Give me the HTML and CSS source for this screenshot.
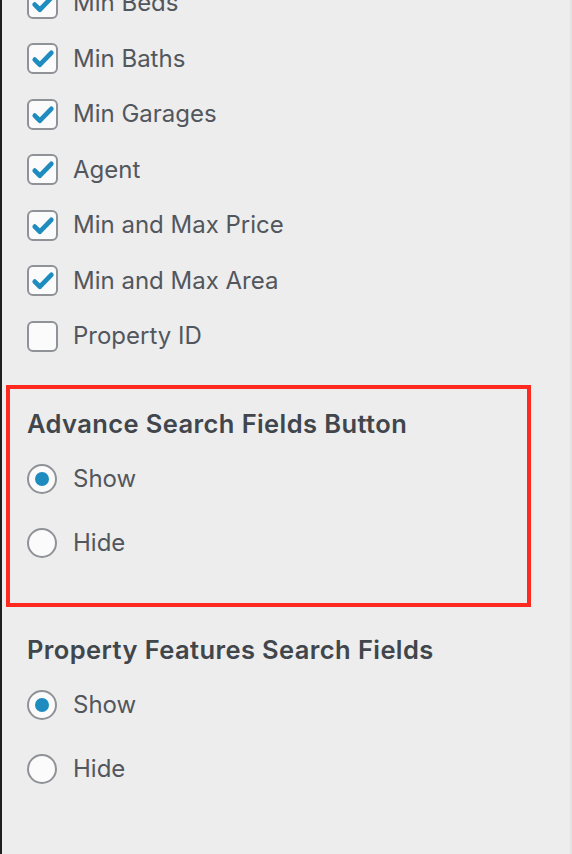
FILE: index.html
```html
<!DOCTYPE html>
<html>
<head>
<meta charset="utf-8">
<link rel="stylesheet" href="styles.css">
</head>
<body>
<div class="panel">
  <ul class="checks">
    <li class="row"><span class="cb on"><svg viewBox="0 0 26 26"><path d="M5.5 14 L10.5 19 L21.5 7.5"/></svg></span><span class="label">Min Beds</span></li>
    <li class="row"><span class="cb on"><svg viewBox="0 0 26 26"><path d="M5.5 14 L10.5 19 L21.5 7.5"/></svg></span><span class="label">Min Baths</span></li>
    <li class="row"><span class="cb on"><svg viewBox="0 0 26 26"><path d="M5.5 14 L10.5 19 L21.5 7.5"/></svg></span><span class="label">Min Garages</span></li>
    <li class="row"><span class="cb on"><svg viewBox="0 0 26 26"><path d="M5.5 14 L10.5 19 L21.5 7.5"/></svg></span><span class="label">Agent</span></li>
    <li class="row"><span class="cb on"><svg viewBox="0 0 26 26"><path d="M5.5 14 L10.5 19 L21.5 7.5"/></svg></span><span class="label">Min and Max Price</span></li>
    <li class="row"><span class="cb on"><svg viewBox="0 0 26 26"><path d="M5.5 14 L10.5 19 L21.5 7.5"/></svg></span><span class="label">Min and Max Area</span></li>
    <li class="row"><span class="cb"></span><span class="label">Property ID</span></li>
  </ul>

  <section class="group highlighted">
    <h3 class="heading">Advance Search Fields Button</h3>
    <div class="radio-row"><span class="radio on"></span><span class="label">Show</span></div>
    <div class="radio-row"><span class="radio"></span><span class="label">Hide</span></div>
  </section>

  <section class="group plain">
    <h3 class="heading">Property Features Search Fields</h3>
    <div class="radio-row"><span class="radio on"></span><span class="label">Show</span></div>
    <div class="radio-row"><span class="radio"></span><span class="label">Hide</span></div>
  </section>
</div>
</body>
</html>
```

FILE: styles.css
```css
html, body {
  margin: 0;
  padding: 0;
  background: #ededed;
}

.panel {
  box-sizing: border-box;
  width: 572px;
  height: 854px;
  overflow: hidden;
  background: #ededed;
  border-left: 2px solid #1f1f1f;
  border-right: 2px solid #e3e3e3;
  padding-left: 25px;
  font-family: "Inter", "Liberation Sans", sans-serif;
  color: #52575d;
}

.checks {
  list-style: none;
  margin: -24.75px 0 0 0;
  padding: 0;
}

.row {
  height: 55.5px;
  display: flex;
  align-items: center;
}

.cb {
  box-sizing: border-box;
  width: 31px;
  height: 31px;
  border: 2px solid #8f9296;
  border-radius: 6px;
  background: #fbfbfb;
  display: flex;
  align-items: center;
  justify-content: center;
  flex: none;
}

.cb svg {
  width: 27px;
  height: 27px;
}

.cb svg path {
  fill: none;
  stroke: #1e8cbe;
  stroke-width: 4.5;
  stroke-linecap: round;
  stroke-linejoin: round;
}

.label {
  margin-left: 15px;
  font-size: 24px;
  line-height: 30px;
}

.radio-row .label {
  margin-left: 16px;
}

.group {
  box-sizing: border-box;
}

.highlighted {
  margin: 21.5px 0 0 -21px;
  width: 525px;
  border: 4px solid #ff2a1f;
  padding: 20px 0 28px 17px;
}

.plain {
  margin-top: 28px;
}

.heading {
  margin: 0 0 8px 0;
  font-size: 25.5px;
  line-height: 30px;
  letter-spacing: 0.4px;
  font-weight: 600;
  color: #40464c;
}

.radio-row {
  height: 64px;
  display: flex;
  align-items: center;
}

.radio {
  box-sizing: border-box;
  width: 30px;
  height: 30px;
  border: 2px solid #8f9296;
  border-radius: 50%;
  background: #fbfbfb;
  display: flex;
  align-items: center;
  justify-content: center;
  flex: none;
}

.radio.on::after {
  content: "";
  width: 14px;
  height: 14px;
  border-radius: 50%;
  background: #1e8cbe;
}
```
